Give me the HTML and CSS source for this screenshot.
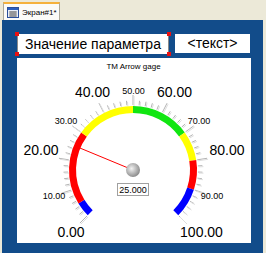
FILE: index.html
```html
<!DOCTYPE html>
<html lang="ru">

<head>
    <meta charset="UTF-8">
    <meta name="viewport" content="width=device-width, initial-scale=1.0">
    <title>Экран#1</title>
    <link rel="stylesheet" href="styles.css">
</head>

<body>
    <div class="tabbar">
        <div class="tab">
            <svg class="tab-icon" width="12" height="11" viewBox="0 0 12 11">
                <rect x="0.5" y="0.5" width="11" height="10" fill="#e8eef8" stroke="#2a4f9a"/>
                <rect x="1" y="1" width="10" height="2" fill="#2a5fc0"/>
                <path d="M2 5h8M2 7h8M2 9h8M4 4v6M6 4v6M8 4v6" stroke="#7a7a7a" stroke-width="1"/>
            </svg>
            <span>Экран#1*</span>
        </div>
    </div>

    <div class="screen">
        <div class="labels">
            <div class="label label-param">
                Значение параметра
                <span class="handle handle-tl"></span>
                <span class="handle handle-tr"></span>
                <span class="handle handle-bl"></span>
                <span class="handle handle-br"></span>
            </div>
            <div class="label label-text">&lt;текст&gt;</div>
        </div>

        <div class="gauge-panel">
            <svg id="gauge" width="234" height="185" viewBox="17 58 234 185">
                <text class="gauge-title" x="133.5" y="69">TM Arrow gage</text>
                <g id="ticks"></g>
                <g id="bands"></g>

                <text class="major" x="71" y="237">0.00</text>
                <text class="minor" x="54" y="199">10.00</text>
                <text class="major" x="41" y="155">20.00</text>
                <text class="minor" x="66" y="124">30.00</text>
                <text class="major" x="92.5" y="97">40.00</text>
                <text class="minor" x="133.5" y="94">50.00</text>
                <text class="major" x="174.5" y="97">60.00</text>
                <text class="minor" x="199" y="124">70.00</text>
                <text class="major" x="227" y="155">80.00</text>
                <text class="minor" x="212" y="199">90.00</text>
                <text class="major" x="201.5" y="237">100.00</text>

                <defs>
                    <radialGradient id="ball" cx="0.4" cy="0.4" r="0.6">
                        <stop offset="0" stop-color="#f2f2f2"/>
                        <stop offset="1" stop-color="#8e8e8e"/>
                    </radialGradient>
                </defs>
                <line id="needle" stroke="#ff0000" stroke-width="1"/>
                <circle cx="133" cy="170" r="7" fill="url(#ball)"/>

                <rect class="value-box" x="117.5" y="183.5" width="31" height="12"/>
                <text class="value-text" x="133" y="193">25.000</text>
            </svg>
        </div>
    </div>

    <script src="gauge.js"></script>
</body>

</html>
```

FILE: styles.css
```css
body {
    margin: 0;
    width: 266px;
    height: 253px;
    overflow: hidden;
    background-color: #ece9d8;
    font-family: 'Liberation Sans', Arial, sans-serif;
}

.tabbar {
    height: 20px;
    padding: 2px 0 0 3px;
    box-sizing: border-box;
    display: flex;
}

.tab {
    width: 57px;
    height: 18px;
    box-sizing: border-box;
    background-color: #fbfbf8;
    border: 1px solid #aca899;
    border-top: 2px solid #f5b13c;
    border-bottom: none;
    display: flex;
    align-items: center;
    gap: 3px;
    padding-left: 3px;
    font-size: 8px;
    color: #000;
}

.tab-icon {
    display: block;
}

.screen {
    margin: 0 3px 0 2px;
    height: 233px;
    box-sizing: border-box;
    padding: 14px 0 0 15px;
    background-color: #124c8a;
}

.labels {
    display: flex;
    gap: 6px;
}

.label {
    background-color: white;
    font-size: 14px;
    height: 20px;
    line-height: 20px;
    text-align: center;
    color: #000;
}

.label-param {
    position: relative;
    width: 150px;
    border-left: 1px solid #8a8a8a;
    border-right: 1px solid #8a8a8a;
}

.label-text {
    width: 75px;
    height: 19px;
    line-height: 19px;
}

.handle {
    position: absolute;
    width: 4px;
    height: 4px;
    background-color: #e81010;
}

.handle-tl { left: -3px; top: -2px; }
.handle-tr { right: -3px; top: -2px; }
.handle-bl { left: -3px; bottom: -2px; }
.handle-br { right: -3px; bottom: -2px; }

.gauge-panel {
    margin-top: 4px;
    width: 234px;
    height: 185px;
    background-color: white;
}

.gauge-panel svg {
    display: block;
}

.gauge-panel text {
    font-family: 'Liberation Sans', Arial, sans-serif;
    text-anchor: middle;
    fill: #000;
}

.gauge-title {
    font-size: 8px;
}

.major {
    font-size: 14px;
}

.minor {
    font-size: 9px;
}

.value-box {
    fill: white;
    stroke: #a0a0a0;
    stroke-width: 1;
}

.value-text {
    font-size: 9px;
}
```

FILE: gauge.js
```js
// Arrow gauge: ticks, coloured bands and needle
const cx = 133;
const cy = 170;
const startAngle = -135;
const sweep = 270;
const value = 25;

const bands = [
    [0, 5, '#0000ff'],
    [5, 30, '#ff0000'],
    [30, 50, '#ffff00'],
    [50, 70, '#11e611'],
    [70, 80, '#ffff00'],
    [80, 90, '#ff0000'],
    [90, 100, '#0000ff']
];

const svgNS = 'http://www.w3.org/2000/svg';

function polar(v, r) {
    const a = (startAngle + sweep * v / 100) * Math.PI / 180;
    return [cx + r * Math.sin(a), cy - r * Math.cos(a)];
}

function make(tag, attrs) {
    const el = document.createElementNS(svgNS, tag);
    for (const k in attrs) el.setAttribute(k, attrs[k]);
    return el;
}

// ticks every 2 units, long ones every 10
const ticks = document.getElementById('ticks');
for (let v = 0; v <= 100; v += 2) {
    const long = v % 10 === 0;
    const [x1, y1] = polar(v, 65);
    const [x2, y2] = polar(v, long ? 75 : 69.5);
    ticks.appendChild(make('line', { x1, y1, x2, y2, stroke: '#b4b4b4', 'stroke-width': 1 }));
    ticks.appendChild(make('line', { x1: x1 + 1, y1: y1 + 1, x2: x2 + 1, y2: y2 + 1, stroke: '#dedede', 'stroke-width': 1 }));
}

// needle sits under the bands
const [nx, ny] = polar(value, 61);
const needle = document.getElementById('needle');
needle.setAttribute('x1', cx);
needle.setAttribute('y1', cy);
needle.setAttribute('x2', nx);
needle.setAttribute('y2', ny);

const bandGroup = document.getElementById('bands');
bandGroup.parentNode.insertBefore(needle, bandGroup);
for (const [from, to, color] of bands) {
    const [x1, y1] = polar(from, 60.5);
    const [x2, y2] = polar(to, 60.5);
    const d = `M${x1} ${y1} A60.5 60.5 0 0 1 ${x2} ${y2}`;
    bandGroup.appendChild(make('path', { d, fill: 'none', stroke: color, 'stroke-width': 7 }));
}
```
